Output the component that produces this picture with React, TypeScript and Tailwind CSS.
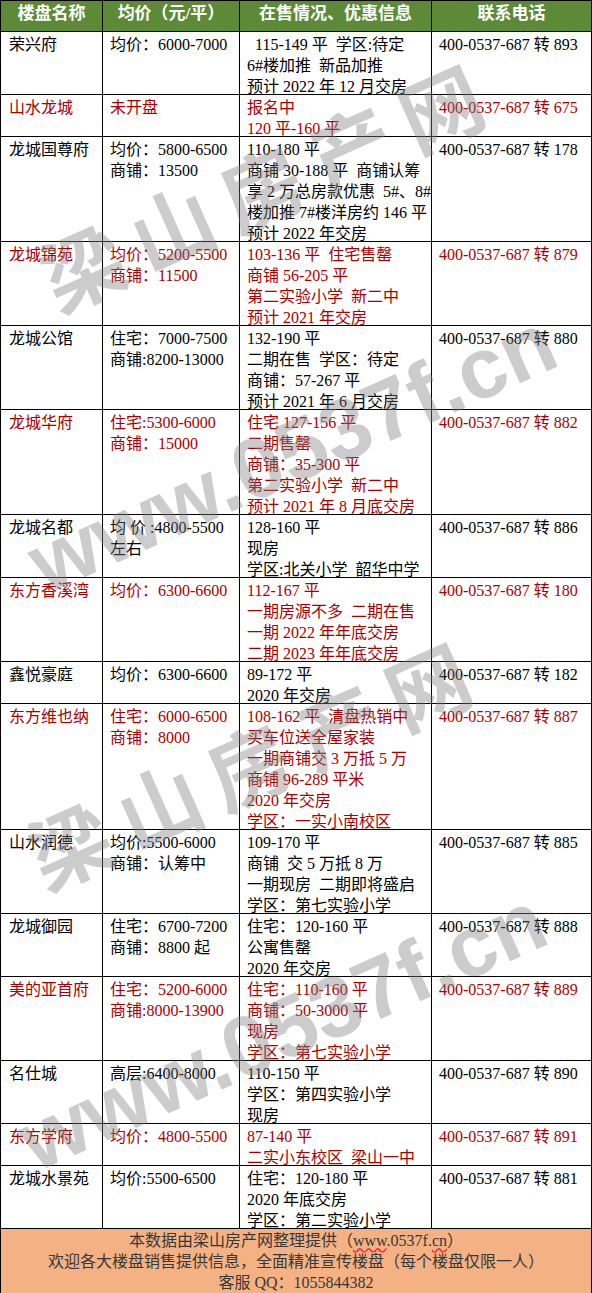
import React from 'react'

type Row = {
  name: string
  price: string[]
  info: string[]
  phone: string
  red?: boolean
}

const rows: Row[] = [
  { name: '荣兴府', price: ['均价：6000-7000'], info: ['  115-149 平  学区:待定', '6#楼加推  新品加推', '预计 2022 年 12 月交房'], phone: '400-0537-687 转 893' },
  { name: '山水龙城', price: ['未开盘'], info: ['报名中', '120 平-160 平'], phone: '400-0537-687 转 675', red: true },
  { name: '龙城国尊府', price: ['均价：5800-6500', '商铺：13500'], info: ['110-180 平', '商铺 30-188 平  商铺认筹', '享 2 万总房款优惠  5#、8#', '楼加推 7#楼洋房约 146 平', '预计 2022 年交房'], phone: '400-0537-687 转 178' },
  { name: '龙城锦苑', price: ['均价：5200-5500', '商铺：11500'], info: ['103-136 平  住宅售罄', '商铺 56-205 平', '第二实验小学  新二中', '预计 2021 年交房'], phone: '400-0537-687 转 879', red: true },
  { name: '龙城公馆', price: ['住宅：7000-7500', '商铺:8200-13000'], info: ['132-190 平', '二期在售  学区：待定', '商铺：57-267 平', '预计 2021 年 6 月交房'], phone: '400-0537-687 转 880' },
  { name: '龙城华府', price: ['住宅:5300-6000', '商铺：15000'], info: ['住宅 127-156 平', '二期售罄', '商铺：35-300 平', '第二实验小学  新二中', '预计 2021 年 8 月底交房'], phone: '400-0537-687 转 882', red: true },
  { name: '龙城名都', price: ['均 价 :4800-5500', '左右'], info: ['128-160 平', '现房', '学区:北关小学  韶华中学'], phone: '400-0537-687 转 886' },
  { name: '东方香溪湾', price: ['均价：6300-6600'], info: ['112-167 平', '一期房源不多  二期在售', '一期 2022 年年底交房', '二期 2023 年年底交房'], phone: '400-0537-687 转 180', red: true },
  { name: '鑫悦豪庭', price: ['均价：6300-6600'], info: ['89-172 平', '2020 年交房'], phone: '400-0537-687 转 182' },
  { name: '东方维也纳', price: ['住宅：6000-6500', '商铺：8000'], info: ['108-162 平  清盘热销中', '买车位送全屋家装', '一期商铺交 3 万抵 5 万', '商铺 96-289 平米', '2020 年交房', '学区：一实小南校区'], phone: '400-0537-687 转 887', red: true },
  { name: '山水润德', price: ['均价:5500-6000', '商铺：认筹中'], info: ['109-170 平', '商铺  交 5 万抵 8 万', '一期现房  二期即将盛启', '学区：第七实验小学'], phone: '400-0537-687 转 885' },
  { name: '龙城御园', price: ['住宅：6700-7200', '商铺：8800 起'], info: ['住宅：120-160 平', '公寓售罄', '2020 年交房'], phone: '400-0537-687 转 888' },
  { name: '美的亚首府', price: ['住宅：5200-6000', '商铺:8000-13900'], info: ['住宅：110-160 平', '商铺：50-3000 平', '现房', '学区：第七实验小学'], phone: '400-0537-687 转 889', red: true },
  { name: '名仕城', price: ['高层:6400-8000'], info: ['110-150 平', '学区：第四实验小学', '现房'], phone: '400-0537-687 转 890' },
  { name: '东方学府', price: ['均价：4800-5500'], info: ['87-140 平', '二实小东校区  梁山一中'], phone: '400-0537-687 转 891', red: true },
  { name: '龙城水景苑', price: ['均价:5500-6500'], info: ['住宅：120-180 平', '2020 年底交房', '学区：第二实验小学'], phone: '400-0537-687 转 881' },
]

const headers = ['楼盘名称', '均价（元/平）', '在售情况、优惠信息', '联系电话']

const Cell = ({ lines, red, first }: { lines: string[]; red?: boolean; first?: boolean }) => (
  <div className={`border-r border-b border-black pt-[2px] ${first ? 'pl-2' : 'pl-[7px]'} ${red ? 'text-[#a80000]' : 'text-black'}`}>
    <div className="leading-[21px] -mb-[3px]">
      {lines.map((l, i) => (
        <div key={i} className="whitespace-pre">{l}</div>
      ))}
    </div>
  </div>
)

const App = () => {
  return (
    <div className="w-[592px] bg-white font-['Liberation_Serif','Noto_Sans_CJK_SC',serif] text-[16px]">
      <div className="relative overflow-hidden">
        <div className="grid grid-cols-[102px_137px_192px_160px] border-l border-t border-black">
          {/* header */}
          {headers.map((h) => (
            <div
              key={h}
              className="h-[31px] border-r border-b border-black bg-[#5d8a37] text-white text-[17px] font-bold text-center leading-[26px]"
            >
              {h}
            </div>
          ))}

          {/* rows */}
          {rows.map((r) => (
            <React.Fragment key={r.name}>
              <Cell lines={[r.name]} red={r.red} first />
              <Cell lines={r.price} red={r.red} />
              <Cell lines={r.info} red={r.red} />
              <Cell lines={[r.phone]} red={r.red} />
            </React.Fragment>
          ))}

          {/* footer */}
          <div className="col-span-4 border-r border-b border-black bg-[#f4b183] text-[#383838] text-center leading-[21px] pt-px pb-px">
            <div>
              本数据由梁山房产网整理提供（
              <span className="underline decoration-wavy decoration-red-500">www</span>
              .0537f.
              <span className="underline decoration-wavy decoration-red-500">cn</span>）
            </div>
            <div>欢迎各大楼盘销售提供信息，全面精准宣传楼盘（每个楼盘仅限一人）</div>
            <div>客服 QQ：1055844382</div>
          </div>
        </div>

        {/* watermark */}
        <div className="pointer-events-none absolute inset-0 text-[#808080]/40 font-bold">
          <div className="absolute left-[268px] top-[182px] -translate-x-1/2 -translate-y-1/2 -rotate-[24deg] whitespace-nowrap font-['Noto_Sans_CJK_SC',sans-serif] text-[82px] tracking-[16px] leading-none">
            梁山房产网
          </div>
          <div className="absolute left-[292px] top-[452px] -translate-x-1/2 -translate-y-1/2 -rotate-[24deg] whitespace-nowrap font-['Liberation_Sans',sans-serif] text-[86px] leading-none">
            www.0537f.cn
          </div>
          <div className="absolute left-[255px] top-[760px] -translate-x-1/2 -translate-y-1/2 -rotate-[24deg] whitespace-nowrap font-['Noto_Sans_CJK_SC',sans-serif] text-[82px] tracking-[16px] leading-none">
            梁山房产网
          </div>
          <div className="absolute left-[282px] top-[1030px] -translate-x-1/2 -translate-y-1/2 -rotate-[24deg] whitespace-nowrap font-['Liberation_Sans',sans-serif] text-[86px] leading-none">
            www.0537f.cn
          </div>
        </div>
      </div>
    </div>
  )
}

export default App
